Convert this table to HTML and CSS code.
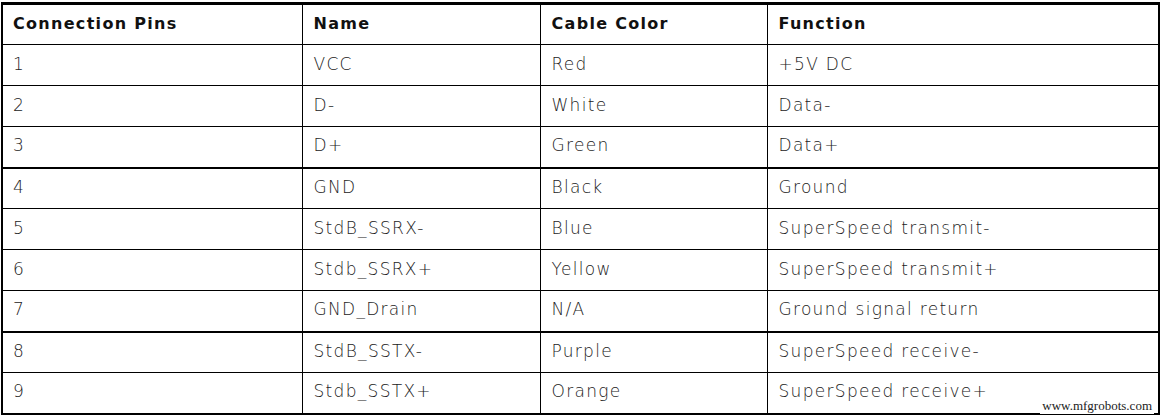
FILE: index.html
```html
<!DOCTYPE html>
<html>
<head>
<meta charset="utf-8">
<link rel="stylesheet" href="styles.css">
</head>
<body>
<div class="page">
  <table class="pins">
    <thead>
      <tr><th class="c1">Connection Pins</th><th class="c2">Name</th><th class="c3">Cable Color</th><th class="c4">Function</th></tr>
    </thead>
    <tbody>
      <tr><td>1</td><td>VCC</td><td>Red</td><td>+5V DC</td></tr>
      <tr><td>2</td><td>D-</td><td>White</td><td>Data-</td></tr>
      <tr class="thick"><td>3</td><td>D+</td><td>Green</td><td>Data+</td></tr>
      <tr><td>4</td><td>GND</td><td>Black</td><td>Ground</td></tr>
      <tr><td>5</td><td>StdB_SSRX-</td><td>Blue</td><td>SuperSpeed transmit-</td></tr>
      <tr><td>6</td><td>Stdb_SSRX+</td><td>Yellow</td><td>SuperSpeed transmit+</td></tr>
      <tr class="thick"><td>7</td><td>GND_Drain</td><td>N/A</td><td>Ground signal return</td></tr>
      <tr><td>8</td><td>StdB_SSTX-</td><td>Purple</td><td>SuperSpeed receive-</td></tr>
      <tr><td>9</td><td>Stdb_SSTX+</td><td>Orange</td><td>SuperSpeed receive+</td></tr>
    </tbody>
  </table>
  <div class="watermark">www.mfgrobots.com</div>
</div>
</body>
</html>
```
FILE: styles.css
```css
html, body {
  margin: 0;
  padding: 0;
  background: #fff;
}
.page {
  position: relative;
  width: 1163px;
  height: 418px;
  padding: 2px 0 0 1px;
  box-sizing: border-box;
}
.pins {
  border-collapse: collapse;
  table-layout: fixed;
  width: 1159px;
  font-family: "DejaVu Sans", "Liberation Sans", sans-serif;
  font-size: 17px;
}
.pins th, .pins td {
  box-sizing: border-box;
  border: 1px solid #000;
  text-align: left;
  padding: 0 0 3px 11px;
  vertical-align: middle;
}
.pins th {
  height: 41px;
  font-weight: 700;
  font-size: 16px;
  letter-spacing: 1.3px;
  color: #111;
  border-top: 3px solid #000;
}
.pins td {
  height: 41px;
  font-weight: 200;
  letter-spacing: 1.3px;
  color: #222;
}
.pins tr > :first-child {
  border-left: 2px solid #000;
  padding-left: 10px;
}
.pins tr > :last-child {
  border-right: 2px solid #000;
}
.pins tbody tr.thick td {
  border-bottom: 2px solid #000;
}
.pins tbody tr:last-child td {
  border-bottom: 2px solid #000;
}
.c1 { width: 300px; }
.c2 { width: 238px; }
.c3 { width: 227px; }
.watermark {
  position: absolute;
  right: 9px;
  bottom: 4px;
  background: #fff;
  padding: 0 2px;
  font-family: "Liberation Serif", serif;
  font-size: 13px;
  color: #222;
}
```
